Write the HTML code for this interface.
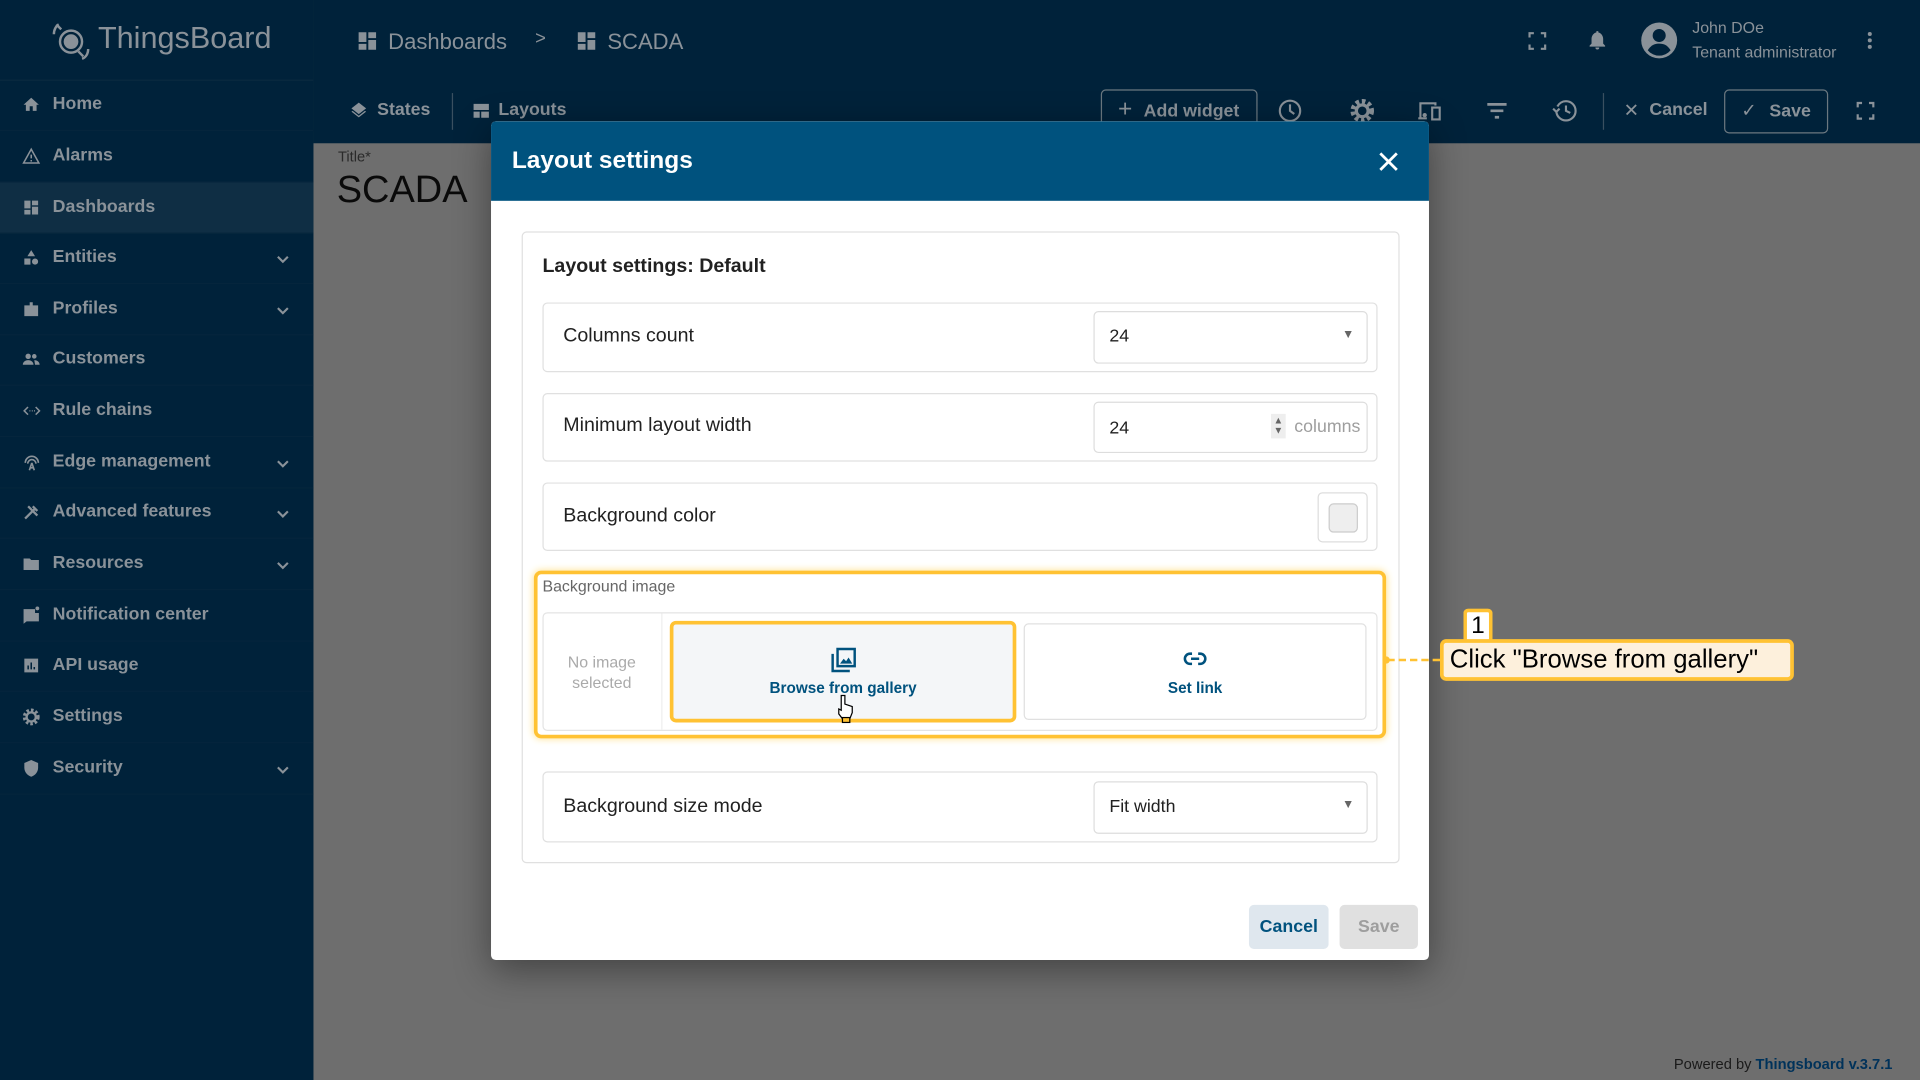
<!DOCTYPE html>
<html><head><meta charset="utf-8"><style>
*{box-sizing:border-box;margin:0;padding:0}
html,body{width:1920px;height:1080px;overflow:hidden;background:#6e6e6e;font-family:"Liberation Sans",Arial,sans-serif}
#w{position:absolute;left:0;top:0;width:1568px;height:882px;transform:scale(1.22449);transform-origin:0 0;background:#6e6e6e}
.abs{position:absolute}
.side{left:0;top:0;width:256px;height:882px;background:#00223a}
.top{left:256px;top:0;width:1312px;height:117px;background:#00223a}
.item{position:absolute;left:0;width:256px;height:41.7px;color:#8a9299;font-size:14.5px;font-weight:bold;display:flex;align-items:center;padding-left:43px;border-bottom:1px solid #05253c}
.item svg.ic{position:absolute;left:18px;top:13px}
.item .chev{position:absolute;left:224px;top:15px}
.g{color:#8a9299}
.dlg{left:401px;top:99px;width:766px;height:685px;background:#fff;border-radius:4px;overflow:hidden;box-shadow:0 8px 30px rgba(0,0,0,.4)}
.hd{height:65px;background:#00527e;color:#fff;font-size:20px;font-weight:bold;padding:21px 17px}
.row{position:absolute;left:42px;width:682px;border:1px solid #e0e0e0;border-radius:4px}
.lbl{position:absolute;left:16px;font-size:16px;color:#212121}
.sel{position:absolute;border:1px solid #ddd;border-radius:4px;font-size:14.5px;color:#212121;padding-left:12px}
</style></head><body><div id="w">
<div class="abs side">
 <svg class="abs" style="left:38px;top:14px" width="40" height="38" viewBox="0 0 40 38"><g fill="none" stroke="#8a9299" stroke-width="2"><circle cx="20" cy="20" r="9"/><path d="M8 6l4 4M30 32l-4-4M6 14c0-4 2-7 4-8M34 26c0 4-2 7-5 8"/></g><circle cx="20" cy="20" r="6" fill="#8a9299"/></svg>
 <div class="abs g" style="left:80px;top:17px;font-size:25px">ThingsBoard</div>
 <div class="abs" style="left:0;top:65px;width:256px;height:1px;background:#0a2a40"></div>
 <div class="item" style="top:65px"><svg class="ic" width="15" height="15" viewBox="0 0 24 24"><path fill="#8a9299" d="M10 20v-6h4v6h5v-8h3L12 3 2 12h3v8z"/></svg>Home</div>
 <div class="item" style="top:107px"><svg class="ic" width="15" height="15" viewBox="0 0 24 24"><path fill="none" stroke="#8a9299" stroke-width="2" d="M12 3L2 21h20zM12 10v5M12 17v2"/></svg>Alarms</div>
 <div class="item" style="top:149px;background:#0f2e44"><svg class="ic" width="15" height="15" viewBox="0 0 24 24"><path fill="#8a9299" d="M3 13h8V3H3zm0 8h8v-6H3zm10 0h8V11h-8zm0-18v6h8V3z"/></svg>Dashboards</div>
 <div class="item" style="top:190px"><svg class="ic" width="15" height="15" viewBox="0 0 24 24"><path fill="#8a9299" d="M12 2l5 8H7zM3 13h8v8H3zM17 13a4 4 0 110 8 4 4 0 010-8z"/></svg>Entities<svg class="chev" width="14" height="14" viewBox="0 0 24 24"><path fill="none" stroke="#8a9299" stroke-width="3" d="M5 8l7 7 7-7"/></svg></div>
 <div class="item" style="top:232px"><svg class="ic" width="15" height="15" viewBox="0 0 24 24"><path fill="#8a9299" d="M3 7h7V3h4v4h7v14H3z"/></svg>Profiles<svg class="chev" width="14" height="14" viewBox="0 0 24 24"><path fill="none" stroke="#8a9299" stroke-width="3" d="M5 8l7 7 7-7"/></svg></div>
 <div class="item" style="top:273px"><svg class="ic" width="15" height="15" viewBox="0 0 24 24"><circle cx="8" cy="8" r="3.5" fill="#8a9299"/><circle cx="16" cy="8" r="3" fill="#8a9299"/><path fill="#8a9299" d="M1 19c0-4 4-6 7-6s7 2 7 6zM16 13c3 0 7 2 7 6h-6"/></svg>Customers</div>
 <div class="item" style="top:315px"><svg class="ic" width="16" height="15" viewBox="0 0 24 24"><path fill="none" stroke="#8a9299" stroke-width="2" d="M7 7l-5 5 5 5M17 7l5 5-5 5M9 12h1M12 12h1M15 12h1"/></svg>Rule chains</div>
 <div class="item" style="top:357px"><svg class="ic" width="16" height="16" viewBox="0 0 24 24"><path fill="none" stroke="#8a9299" stroke-width="2" d="M4 12a8 8 0 0116 0M7 13a5 5 0 0110 0M12 12l-3 9M12 12l3 9M10 18h4"/></svg>Edge management<svg class="chev" width="14" height="14" viewBox="0 0 24 24"><path fill="none" stroke="#8a9299" stroke-width="3" d="M5 8l7 7 7-7"/></svg></div>
 <div class="item" style="top:398px"><svg class="ic" width="15" height="15" viewBox="0 0 24 24"><path fill="none" stroke="#8a9299" stroke-width="3" d="M4 20L16 8M8 4l12 12M14 4l6 6"/></svg>Advanced features<svg class="chev" width="14" height="14" viewBox="0 0 24 24"><path fill="none" stroke="#8a9299" stroke-width="3" d="M5 8l7 7 7-7"/></svg></div>
 <div class="item" style="top:440px"><svg class="ic" width="15" height="15" viewBox="0 0 24 24"><path fill="#8a9299" d="M2 5h8l2 2h10v13H2z"/></svg>Resources<svg class="chev" width="14" height="14" viewBox="0 0 24 24"><path fill="none" stroke="#8a9299" stroke-width="3" d="M5 8l7 7 7-7"/></svg></div>
 <div class="item" style="top:482px"><svg class="ic" width="15" height="15" viewBox="0 0 24 24"><path fill="#8a9299" d="M2 4h15v5h5v11H6l-4 3z"/><circle cx="20" cy="3" r="2.5" fill="#8a9299"/></svg>Notification center</div>
 <div class="item" style="top:523px"><svg class="ic" width="15" height="15" viewBox="0 0 24 24"><path fill="#8a9299" d="M3 3h18v18H3z"/><path stroke="#00223a" stroke-width="2" d="M8 17v-5M12 17V8M16 17v-3"/></svg>API usage</div>
 <div class="item" style="top:565px"><svg class="ic" width="15" height="15" viewBox="0 0 24 24"><circle cx="12" cy="12" r="8" fill="none" stroke="#8a9299" stroke-width="6" stroke-dasharray="3 2.3"/><circle cx="12" cy="12" r="6" fill="none" stroke="#8a9299" stroke-width="3"/></svg>Settings</div>
 <div class="item" style="top:607px"><svg class="ic" width="15" height="15" viewBox="0 0 24 24"><path fill="#8a9299" d="M12 1l9 4v6c0 6-4 10-9 12-5-2-9-6-9-12V5z"/></svg>Security<svg class="chev" width="14" height="14" viewBox="0 0 24 24"><path fill="none" stroke="#8a9299" stroke-width="3" d="M5 8l7 7 7-7"/></svg></div>
</div>
<div class="abs top"></div>
<svg class="abs" style="left:290px;top:24px" width="20" height="19" viewBox="0 0 24 24"><path fill="#8a9299" d="M3 13h8V3H3zm0 8h8v-6H3zm10 0h8V11h-8zm0-18v6h8V3z"/></svg>
<div class="abs g" style="left:317px;top:24px;font-size:18px">Dashboards</div>
<div class="abs g" style="left:437px;top:23px;font-size:15px">&gt;</div>
<svg class="abs" style="left:469px;top:24px" width="20" height="19" viewBox="0 0 24 24"><path fill="#8a9299" d="M3 13h8V3H3zm0 8h8v-6H3zm10 0h8V11h-8zm0-18v6h8V3z"/></svg>
<div class="abs g" style="left:496px;top:24px;font-size:18px">SCADA</div>
<svg class="abs" style="left:1247px;top:25px" width="17" height="17" viewBox="0 0 24 24"><path fill="none" stroke="#8a9299" stroke-width="2.5" d="M3 8V3h5M16 3h5v5M21 16v5h-5M8 21H3v-5"/></svg>
<svg class="abs" style="left:1295px;top:22px" width="19" height="21" viewBox="0 0 24 24"><path fill="#8a9299" d="M12 22a2 2 0 002-2h-4a2 2 0 002 2zm6-6V11c0-3-2-6-5-6.7V3h-2v1.3C8 5 6 8 6 11v5l-2 2v1h16v-1z"/></svg>
<svg class="abs" style="left:1339px;top:17px" width="32" height="32" viewBox="0 0 24 24"><circle cx="12" cy="12" r="11" fill="#8a9299"/><circle cx="12" cy="9" r="4" fill="#00223a"/><path fill="#00223a" d="M5 18c2-3 4-4 7-4s5 1 7 4a9 9 0 01-14 0z"/></svg>
<div class="abs g" style="left:1382px;top:15px;font-size:13px">John DOe</div>
<div class="abs g" style="left:1382px;top:35px;font-size:13px">Tenant administrator</div>
<svg class="abs" style="left:1518px;top:22px" width="18" height="22" viewBox="0 0 24 24"><circle cx="12" cy="5" r="2.2" fill="#8a9299"/><circle cx="12" cy="12" r="2.2" fill="#8a9299"/><circle cx="12" cy="19" r="2.2" fill="#8a9299"/></svg>
<svg class="abs" style="left:285px;top:82px" width="16" height="17" viewBox="0 0 24 24"><path fill="#8a9299" d="M12 2l9 7-9 7-9-7zM3 13l9 7 9-7-1.5-1L12 18l-7.5-6z"/></svg>
<div class="abs g" style="left:308px;top:82px;font-size:14.5px;font-weight:bold">States</div>
<div class="abs" style="left:369px;top:76px;width:1px;height:30px;background:#3a5060"></div>
<svg class="abs" style="left:385px;top:83px" width="16" height="15" viewBox="0 0 24 24"><path fill="#8a9299" d="M2 3h20v8H2zM2 13h8v8H2zM12 13h10v8H12z"/></svg>
<div class="abs g" style="left:407px;top:82px;font-size:14.5px;font-weight:bold">Layouts</div>
<div class="abs g" style="left:899px;top:73px;width:128px;height:34px;border:1px solid #6b7880;border-radius:4px;font-size:14.5px;font-weight:bold;padding:9px 0 0 34px">Add widget</div>
<div class="abs g" style="left:913px;top:78px;font-size:20px">+</div>
<svg class="abs" style="left:1043px;top:80px" width="21" height="21" viewBox="0 0 24 24"><circle cx="12" cy="12" r="9.5" fill="none" stroke="#8a9299" stroke-width="2"/><path fill="none" stroke="#8a9299" stroke-width="2" d="M12 6v6l4 3"/></svg>
<svg class="abs" style="left:1102px;top:80px" width="21" height="21" viewBox="0 0 24 24"><circle cx="12" cy="12" r="8" fill="none" stroke="#8a9299" stroke-width="6" stroke-dasharray="3 2.3"/><circle cx="12" cy="12" r="5.5" fill="none" stroke="#8a9299" stroke-width="3"/></svg>
<svg class="abs" style="left:1156px;top:80px" width="22" height="21" viewBox="0 0 24 24"><path fill="none" stroke="#8a9299" stroke-width="2" d="M4 18V5h14v2M2 19h8M15 9h7v11h-7z"/><circle cx="8" cy="16" r="2" fill="#8a9299"/></svg>
<svg class="abs" style="left:1212px;top:80px" width="21" height="21" viewBox="0 0 24 24"><path stroke="#8a9299" stroke-width="2.5" d="M3 6h18M6 12h12M10 18h4"/></svg>
<svg class="abs" style="left:1267px;top:80px" width="22" height="21" viewBox="0 0 24 24"><path fill="none" stroke="#8a9299" stroke-width="2" d="M4 12a9 9 0 109-9 9 9 0 00-8 5M1 10l3 3 3-3M13 7v5l4 2"/></svg>
<div class="abs" style="left:1309px;top:76px;width:1px;height:30px;background:#3a5060"></div>
<div class="abs g" style="left:1326px;top:81px;font-size:15px">✕</div>
<div class="abs g" style="left:1347px;top:82px;font-size:14.5px;font-weight:bold">Cancel</div>
<div class="abs g" style="left:1408px;top:73px;width:85px;height:36px;border:1px solid #6b7880;border-radius:4px;font-size:14.5px;font-weight:bold;padding:9px 0 0 36px">Save</div>
<div class="abs g" style="left:1422px;top:81px;font-size:15px">✓</div>
<svg class="abs" style="left:1515px;top:82px" width="17" height="17" viewBox="0 0 24 24"><path fill="none" stroke="#8a9299" stroke-width="2.5" d="M3 8V3h5M16 3h5v5M21 16v5h-5M8 21H3v-5"/></svg>
<div class="abs" style="left:276px;top:121px;font-size:12px;color:#2a2a2a">Title*</div>
<div class="abs" style="left:275px;top:137px;font-size:31px;color:#0a0a0a">SCADA</div>
<div class="abs" style="left:1367px;top:862px;font-size:12px;color:#1a1a1a">Powered by <span style="color:#00325a;font-weight:bold">Thingsboard v.3.7.1</span></div>

<div class="abs dlg">
 <div class="hd">Layout settings</div>
 <svg class="abs" style="left:724px;top:24px" width="18" height="18" viewBox="0 0 24 24"><path stroke="#fff" stroke-width="3" d="M3 3l18 18M21 3L3 21"/></svg>
 <div class="abs" style="left:25px;top:90px;width:717px;height:516px;border:1px solid #e0e0e0;border-radius:4px"></div>
 <div class="abs" style="left:42px;top:110px;font-size:16px;font-weight:bold;color:#212121">Layout settings: Default</div>
 <div class="row" style="top:148px;height:57px"><div class="lbl" style="top:18px">Columns count</div>
  <div class="sel" style="left:449px;top:6px;width:224px;height:43px;padding-top:12px">24<span style="position:absolute;right:10px;top:13px;font-size:10px;color:#666">▼</span></div></div>
 <div class="row" style="top:222px;height:56px"><div class="lbl" style="top:17px">Minimum layout width</div>
  <div class="sel" style="left:449px;top:6px;width:224px;height:42px;padding-top:13px">24<span style="position:absolute;left:144px;top:9px;font-size:8px;color:#666;line-height:8px;background:#eee;padding:2px">▲<br>▼</span><span style="position:absolute;left:163px;top:12px;color:#9e9e9e">columns</span></div></div>
 <div class="row" style="top:295px;height:56px"><div class="lbl" style="top:18px">Background color</div>
  <div class="abs" style="left:632px;top:7px;width:41px;height:41px;border:1px solid #ddd;border-radius:4px"><div style="margin:8px;width:24px;height:24px;background:#eee;border:1px solid #ccc;border-radius:4px"></div></div></div>
 <div class="abs" style="left:35px;top:367px;width:696px;height:137px;border:3px solid #ffc233;border-radius:6px;box-shadow:0 0 6px #ffe08a"></div>
 <div class="abs" style="left:42px;top:372px;font-size:13px;color:#666">Background image</div>
 <div class="abs" style="left:42px;top:401px;width:682px;height:97px;border:1px solid #e4e4e4;border-radius:4px"></div>
 <div class="abs" style="left:139px;top:402px;width:1px;height:95px;background:#eee"></div>
 <div class="abs" style="left:42px;top:433px;width:97px;text-align:center;font-size:13px;color:#aaa;line-height:17px">No image<br>selected</div>
 <div class="abs" style="left:146px;top:408px;width:283px;height:83px;background:#f4f6f8;border:3px solid #ffc233;border-radius:5px"></div>
 <svg class="abs" style="left:276px;top:428px" width="24" height="24" viewBox="0 0 24 24"><path fill="none" stroke="#00527e" stroke-width="2" d="M7 3h14v14H7zM3 7v14h14"/><path fill="#00527e" d="M9 15l3-4 2 2 2-3 3 5z"/></svg>
 <div class="abs" style="left:146px;top:456px;width:283px;text-align:center;font-size:12.5px;font-weight:bold;color:#00527e">Browse from gallery</div>
 <div class="abs" style="left:435px;top:410px;width:280px;height:79px;border:1px solid #e0e0e0;border-radius:4px"></div>
 <svg class="abs" style="left:563px;top:429px" width="24" height="20" viewBox="0 0 24 24"><path fill="none" stroke="#00527e" stroke-width="2.5" d="M9 7H7a5 5 0 000 10h2M15 7h2a5 5 0 010 10h-2M8 12h8"/></svg>
 <div class="abs" style="left:435px;top:456px;width:280px;text-align:center;font-size:12.5px;font-weight:bold;color:#00527e">Set link</div>
 <svg class="abs" style="left:282px;top:468px" width="14" height="24" viewBox="0 0 14 24"><path fill="#fff" stroke="#000" stroke-width="1" d="M4 1v12l-2-1v4l3 4h6l2-5v-5l-3-1-3-1V1z"/><rect x="5" y="19" width="6" height="4" fill="#ffc233" stroke="#000"/></svg>
 <div class="row" style="top:531px;height:58px"><div class="lbl" style="top:19px">Background size mode</div>
  <div class="sel" style="left:449px;top:7px;width:224px;height:43px;padding-top:12px">Fit width<span style="position:absolute;right:10px;top:13px;font-size:10px;color:#666">▼</span></div></div>
 <div class="abs" style="left:619px;top:640px;width:65px;height:36px;background:#dfe7ee;border-radius:4px;color:#00527e;font-size:14.5px;font-weight:bold;text-align:center;padding-top:10px">Cancel</div>
 <div class="abs" style="left:693px;top:640px;width:64px;height:36px;background:#e0e0e0;border-radius:4px;color:#9e9e9e;font-size:14.5px;font-weight:bold;text-align:center;padding-top:10px">Save</div>
</div>
<div class="abs" style="left:1129px;top:536px;width:6px;height:6px;border-radius:3px;background:#ffc233"></div>
<div class="abs" style="left:1133px;top:538px;width:43px;border-top:2px dashed #ffc233"></div>
<div class="abs" style="left:1195px;top:497px;width:24px;height:27px;background:#fff;border:3px solid #ffc233;border-bottom:none;border-radius:4px 4px 0 0;font-size:20px;text-align:center;color:#000">1</div>
<div class="abs" style="left:1176px;top:522px;width:289px;height:34px;background:#fdf0dc;border:3px solid #ffc233;border-radius:5px;font-size:21px;color:#000;padding:2px 0 0 5px;white-space:nowrap">Click "Browse from gallery"</div>
</div></body></html>
